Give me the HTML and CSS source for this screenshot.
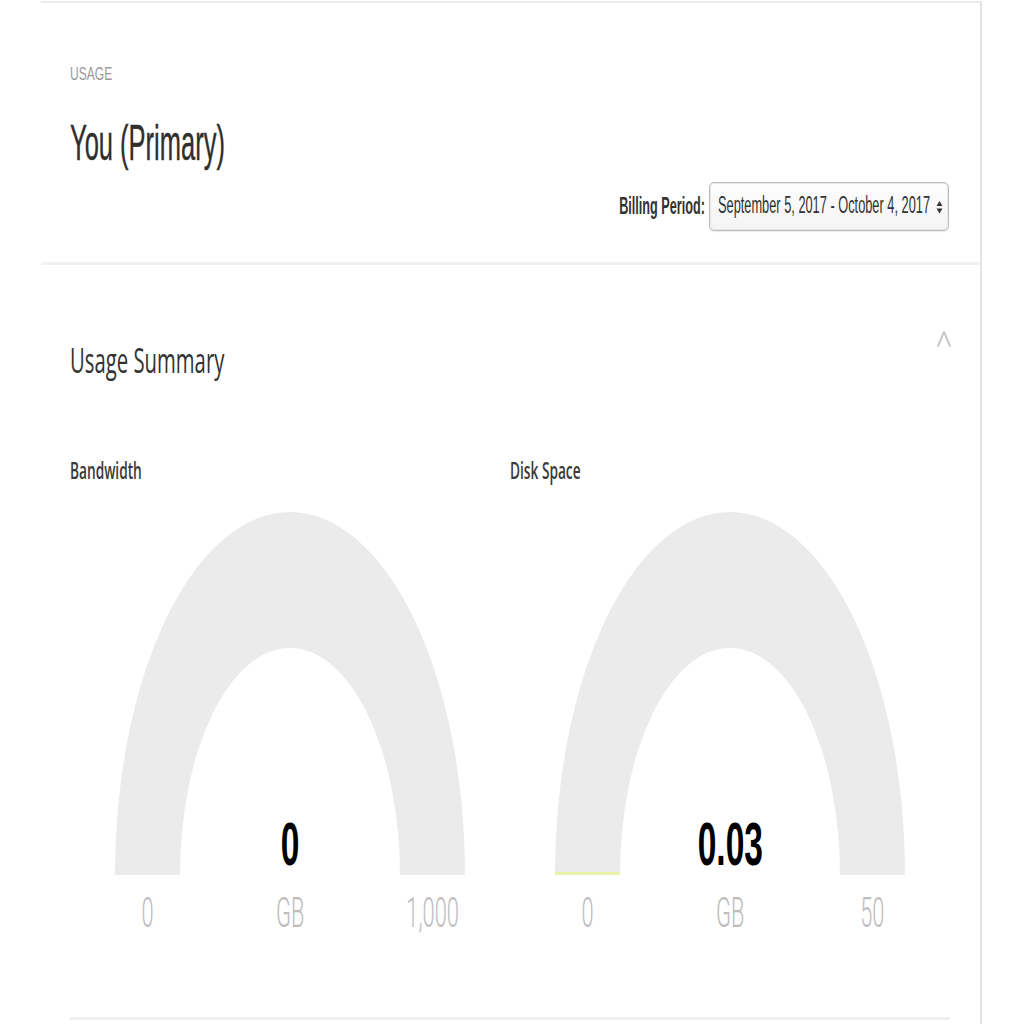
FILE: index.html
```html
<!DOCTYPE html>
<html lang="en">
<head>
<meta charset="utf-8">
<title>Usage</title>
<link rel="stylesheet" href="styles.css">
</head>
<body>
<div class="card">
  <section class="head">
    <div class="eyebrow"><span class="sx sx-usage">USAGE</span></div>
    <h1 class="owner"><span class="sx sx-owner">You (Primary)</span></h1>
    <div class="billing">
      <label class="billing-label"><span class="sx sx-label">Billing Period:</span></label>
      <div class="select">
        <div class="select-text"><span class="sy sy-select">September 5, 2017 - October 4, 2017</span></div>
        <svg class="select-arrows" width="7" height="16" viewBox="0 0 7 16"><path d="M0.5 7 L3.5 2 L6.5 7 Z" fill="#333"/><path d="M0.5 9.5 L3.5 14.5 L6.5 9.5 Z" fill="#333"/></svg>
      </div>
    </div>
  </section>
  <section class="summary">
    <div class="summary-head">
      <h2 class="summary-title"><span class="sx sx-title">Usage Summary</span></h2>
      <svg class="chevron" width="16" height="18" viewBox="0 0 16 18"><path d="M2 16 L8 2 L14 16" fill="none" stroke="#c9c9c9" stroke-width="2" stroke-linecap="round" stroke-linejoin="round"/></svg>
    </div>
    <div class="gauges">
      <div class="gauge-col">
        <h3 class="gauge-name"><span class="sx sx-name">Bandwidth</span></h3>
        <div class="gauge">
          <div class="gauge-stack">
            <svg class="gauge-svg" width="350" height="363" viewBox="0 0 350 363"><path d="M0 363 A175 363 0 0 1 350 363 L285 363 A110 227 0 0 0 65 363 Z" fill="#ecebeb"/></svg>
            <div class="gauge-value"><span class="sx sx-value">0</span></div>
          </div>
          <div class="gauge-scale">
            <span class="scale-item"><span class="sx sx-scale">0</span></span>
            <span class="scale-item"><span class="sx sx-scale">GB</span></span>
            <span class="scale-item"><span class="sx sx-scale">1,000</span></span>
          </div>
        </div>
      </div>
      <div class="gauge-col">
        <h3 class="gauge-name"><span class="sx sx-name">Disk Space</span></h3>
        <div class="gauge">
          <div class="gauge-stack">
            <svg class="gauge-svg" width="350" height="363" viewBox="0 0 350 363"><path d="M0 363 A175 363 0 0 1 350 363 L285 363 A110 227 0 0 0 65 363 Z" fill="#ecebeb"/><rect x="0" y="360" width="65" height="3" fill="#e9f2a8"/></svg>
            <div class="gauge-value"><span class="sx sx-value">0.03</span></div>
          </div>
          <div class="gauge-scale">
            <span class="scale-item"><span class="sx sx-scale">0</span></span>
            <span class="scale-item"><span class="sx sx-scale">GB</span></span>
            <span class="scale-item"><span class="sx sx-scale">50</span></span>
          </div>
        </div>
      </div>
    </div>
  </section>
</div>
</body>
</html>
```
FILE: styles.css
```css
html, body {
  margin: 0;
  padding: 0;
  background: #ffffff;
}
body {
  font-family: "Liberation Sans", Arial, sans-serif;
  color: #333333;
}
h1, h2, h3 {
  margin: 0;
  font-weight: normal;
}
.sx {
  display: inline-block;
  white-space: nowrap;
  transform-origin: left center;
}
.sy {
  display: inline-block;
  white-space: nowrap;
  transform-origin: left center;
}
.card {
  box-sizing: border-box;
  margin-left: 41px;
  margin-top: 1px;
  width: 941px;
  min-height: 1023px;
  border-top: 2px solid #ebebeb;
  border-right: 2px solid #e4e4e4;
}
.head {
  padding: 62px 31px 31px 29px;
  border-bottom: 3px solid #f1f1f1;
}
.eyebrow {
  font-size: 18px;
  line-height: 1;
  color: #9a9a9a;
  height: 18px;
}
.sx-usage { transform: scaleX(0.67); }
.owner {
  margin-top: 34.5px;
  font-size: 50px;
  line-height: 1;
  height: 50px;
  color: #2f2f2f;
  -webkit-text-stroke: 0.4px #2f2f2f;
}
.sx-owner { transform: scaleX(0.51); }
.billing {
  margin-top: 14.5px;
  display: flex;
  justify-content: flex-end;
  align-items: center;
  gap: 4px;
}
.billing-label {
  font-size: 23px;
  font-weight: bold;
  color: #333333;
  line-height: 1;
}
.sx-label {
  transform: scaleX(0.55);
  transform-origin: right center;
}
.select {
  display: flex;
  align-items: center;
  width: 240px;
  height: 49px;
  box-sizing: border-box;
  padding: 0 5px 0 8px;
  border: 1px solid #bdbdbd;
  border-radius: 5px;
  background: linear-gradient(#fdfdfd, #f4f4f4);
  box-shadow: inset 0 0 0 1px #e6e6e6, 0 1px 1px rgba(0,0,0,0.08);
}
.select-text {
  flex: 1;
  min-width: 0;
  font-size: 12.8px;
  line-height: 1;
  color: #333333;
}
.sy-select { transform: scaleY(1.8); }
.select-arrows {
  flex: none;
  display: block;
}
.summary {
  padding: 65px 30px 0 29px;
}
.summary-head {
  display: flex;
  justify-content: space-between;
  align-items: flex-start;
}
.summary-title {
  margin-top: 12px;
  font-family: "Open Sans", sans-serif;
  font-weight: 500;
  font-size: 35px;
  line-height: 1;
  height: 35px;
  color: #333333;
}
.sx-title { transform: scaleX(0.58); }
.chevron {
  display: block;
  margin-right: -2px;
}
.gauges {
  margin-top: 81px;
  display: grid;
  grid-template-columns: 440px 440px;
  padding-bottom: 83px;
  border-bottom: 3px solid #efefef;
}
.gauge-name {
  font-family: "Open Sans", sans-serif;
  font-weight: 600;
  font-size: 24px;
  line-height: 1;
  height: 24px;
  color: #3a3a3a;
}
.sx-name { transform: scaleX(0.57); }
.gauge {
  margin-top: 30px;
  width: 350px;
  margin-left: 45px;
}
.gauge-stack {
  display: grid;
}
.gauge-svg {
  grid-area: 1 / 1;
  display: block;
}
.gauge-value {
  grid-area: 1 / 1;
  align-self: end;
  justify-self: center;
  font-size: 61px;
  font-weight: bold;
  line-height: 1;
  color: #000000;
}
.sx-value {
  transform: scaleX(0.55);
  transform-origin: center center;
}
.gauge-scale {
  margin-top: 16.5px;
  display: grid;
  grid-template-columns: 65px 220px 65px;
  font-family: Roboto, sans-serif;
  font-weight: 300;
  font-size: 42px;
  line-height: 1;
  color: #bdbdbd;
}
.scale-item {
  display: flex;
  justify-content: center;
}
.sx-scale {
  transform: scaleX(0.52);
  transform-origin: center center;
}
```
